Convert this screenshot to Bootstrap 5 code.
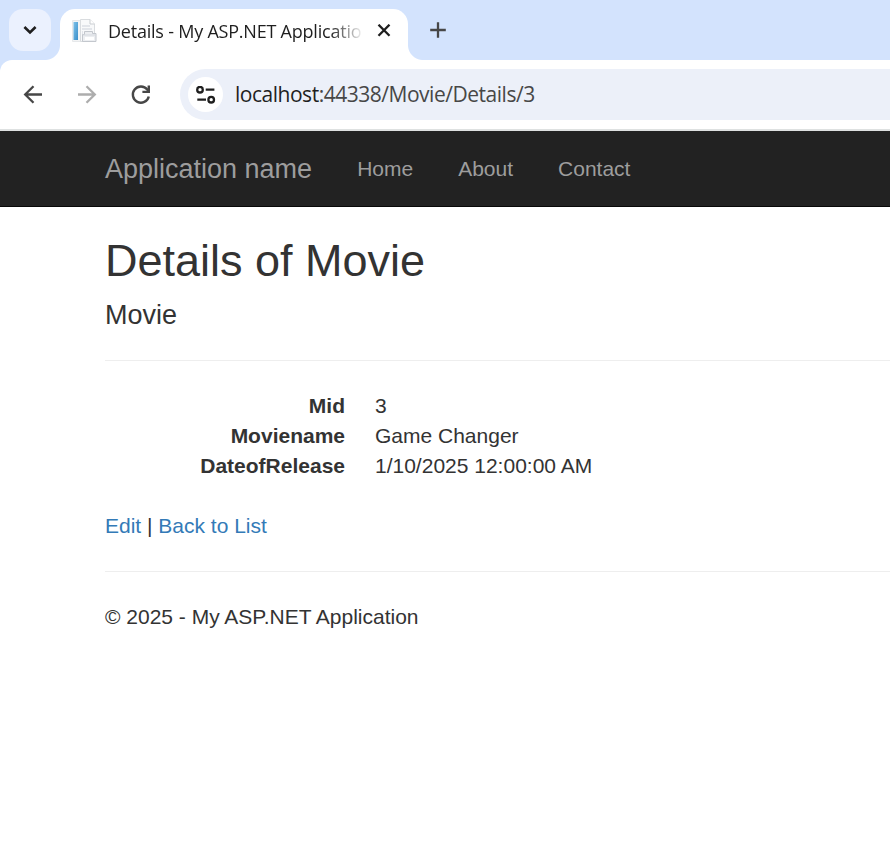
<!DOCTYPE html>
<html lang="en">
<head>
<meta charset="utf-8">
<meta name="viewport" content="width=device-width, initial-scale=1">
<title>Details - My ASP.NET Application</title>
<link href="https://cdn.jsdelivr.net/npm/bootstrap@5.3.0/dist/css/bootstrap.min.css" rel="stylesheet">
<style>
body{font-family:"Liberation Sans",Arial,sans-serif;font-size:21px;line-height:30px;color:#333;background:#fff}
.browser{font-family:"Open Sans","Noto Sans",sans-serif;background:#d3e3fd}
.tab-strip{height:60px;padding:9px 0 0 9px}
.tab-search{width:42px;height:42px;border-radius:14px;background:#ebf1fe;margin-right:9px}
.page-tab{width:348px;height:51px;background:#fff;border-radius:15px 15px 0 0;padding:0 17px 7px 12px}
.page-tab::before,.page-tab::after{content:"";position:absolute;bottom:0;width:15px;height:15px}
.page-tab::before{left:-15px;background:radial-gradient(circle at 0 0,transparent 14.5px,#fff 15.5px)}
.page-tab::after{right:-15px;background:radial-gradient(circle at 100% 0,transparent 14.5px,#fff 15.5px)}
.tab-title{width:254px;font-size:18px;line-height:28px;color:#1f1f1f;margin-left:11px;letter-spacing:-.22px;-webkit-mask-image:linear-gradient(90deg,#000 222px,transparent 256px);mask-image:linear-gradient(90deg,#000 222px,transparent 256px)}
.new-tab{margin:12px 0 0 21px}
.toolbar{height:71px;border-radius:12px 0 0 0;border-bottom:2px solid #dee1e1;padding:0 0 0 20px}
.forward{margin-left:26px}
.address{height:51px;border-radius:26px 0 0 26px;background:#ecf0f9;padding-left:8px;margin-left:24px}
.site-info{width:35px;height:35px}
.url{font-size:21px;letter-spacing:-.48px;color:#474747;margin-left:12px;line-height:30px;padding-bottom:2px}
.url b{font-weight:400;color:#1f1f1f}
.site-nav{height:76px;background:#222;border-bottom:1px solid #080808;padding:0 0 0 105px}
.site-nav .navbar-brand{font-size:27px;line-height:30px;color:#9d9d9d;margin-right:45px}
.site-nav .nav-link{color:#9d9d9d;line-height:30px}
.site-nav .navbar-nav{gap:45px}
.page-body{padding:29px 0 0 105px}
.page-body h2{font-size:45px;line-height:50px;font-weight:400;margin-bottom:14px}
.page-body h4{font-size:27px;line-height:30px;font-weight:400}
.page-body hr{border-top:1px solid #eee;opacity:1;margin:30px 0}
.details{display:grid;grid-template-columns:240px 1fr;column-gap:30px;margin-bottom:30px}
.page-body a{color:#337ab7}
</style>
</head>
<body>
<header class="browser">
  <div class="tab-strip d-flex align-items-start">
    <div class="tab-search d-flex align-items-center justify-content-center">
      <svg width="14" height="10" viewBox="0 0 14 10" fill="none" stroke="#1f1f1f" stroke-width="2.6"><path d="M1.400 2 7 7.400 12.600 2"/></svg>
    </div>
    <div class="page-tab position-relative d-flex align-items-center">
      <svg class="flex-shrink-0" width="25" height="25" viewBox="0 0 25 25">
        <defs><linearGradient id="blue" x2="1" y2="1"><stop stop-color="#7cc0e8"/><stop offset="1" stop-color="#3b8fca"/></linearGradient></defs>
        <path d="M.5 1.500h9v21h-9z" fill="#f3f4f5" stroke="#e6e8ea"/>
        <path d="M1.500 3H6v18H1.500z" fill="url(#blue)"/>
        <path d="M8.500.5H18l4.500 4.500v17.500h-14z" fill="#f8f9fa" stroke="#d9dcdf"/>
        <path d="M18 .5V5h4.500" fill="#fff" stroke="#c9cdd1"/>
        <path d="M10 6h8v2h-8zM10 9h10v2H10zM10 12h1v5h-1z" fill="#e2e5ea"/>
        <path d="M10.500 22.500v-7h2v-3h8v2h3.500v8z" fill="#eceef1" stroke="#c3c7cd"/>
        <path d="M11 16h13" stroke="#d5d9df"/><path d="M13 18h9v3h-9z" fill="#fff"/>
      </svg>
      <span class="tab-title text-nowrap flex-shrink-0">Details - My ASP.NET Applicatio</span>
      <svg class="ms-auto flex-shrink-0 mb-0" width="14" height="14" viewBox="0 0 14 14" stroke="#1f1f1f" stroke-width="2.300"><path d="m1.500 .7 11 11m0-11-11 11"/></svg>
    </div>
    <svg class="new-tab" width="18" height="18" viewBox="0 0 18 18" stroke="#474747" stroke-width="2.300"><path d="M9 1.200v15.600M1.200 9h15.600"/></svg>
  </div>
  <div class="toolbar d-flex align-items-center bg-white">
    <svg width="26" height="26" viewBox="0 0 26 26" fill="none" stroke="#474747" stroke-width="2.300"><path d="M22 12.500H6M13.500 4.200 5.200 12.500l8.300 8.300"/></svg>
    <svg class="forward" width="30" height="26" viewBox="-2 0 30 26" fill="none" stroke="#adadad" stroke-width="2.300"><path d="M4 12.500h16M12.500 4.200 20.800 12.500l-8.300 8.300"/></svg>
    <svg class="ms-4" width="30" height="26" viewBox="-2 0 30 26" fill="none" stroke="#474747" stroke-width="2.400"><path d="M20.800 14.500A8.100 8.100 0 1 1 19.300 7.600l1.700 1.700"/><path d="M20.800 3.500v6.400h-6.400"/></svg>
    <div class="address flex-fill d-flex align-items-center">
      <span class="site-info rounded-circle bg-white d-flex align-items-center justify-content-center">
        <svg width="20" height="18" viewBox="0 0 20 18" fill="none" stroke="#1f1f1f" stroke-width="2.300"><circle cx="4" cy="3.700" r="2.800"/><path d="M9.700 3.700h8.700M1.300 13.700H10"/><circle cx="15.200" cy="13.700" r="2.800"/></svg>
      </span>
      <span class="url text-nowrap"><b>localhost</b>:44338/Movie/Details/3</span>
    </div>
  </div>
</header>
<nav class="site-nav navbar navbar-expand justify-content-start">
  <a class="navbar-brand p-0" href="#">Application name</a>
  <div class="navbar-nav">
    <a class="nav-link p-0" href="#">Home</a>
    <a class="nav-link p-0" href="#">About</a>
    <a class="nav-link p-0" href="#">Contact</a>
  </div>
</nav>
<main class="page-body">
  <h2>Details of Movie</h2>
  <h4 class="mb-0">Movie</h4>
  <hr>
  <dl class="details">
    <dt class="text-end">Mid</dt><dd class="m-0">3</dd>
    <dt class="text-end">Moviename</dt><dd class="m-0">Game Changer</dd>
    <dt class="text-end">DateofRelease</dt><dd class="m-0">1/10/2025 12:00:00 AM</dd>
  </dl>
  <p class="mb-0"><a class="text-decoration-none" href="#">Edit</a> | <a class="text-decoration-none" href="#">Back to List</a></p>
  <hr>
  <footer>© 2025 - My ASP.NET Application</footer>
</main>
<script src="https://cdn.jsdelivr.net/npm/bootstrap@5.3.0/dist/js/bootstrap.bundle.min.js"></script>
</body>
</html>
